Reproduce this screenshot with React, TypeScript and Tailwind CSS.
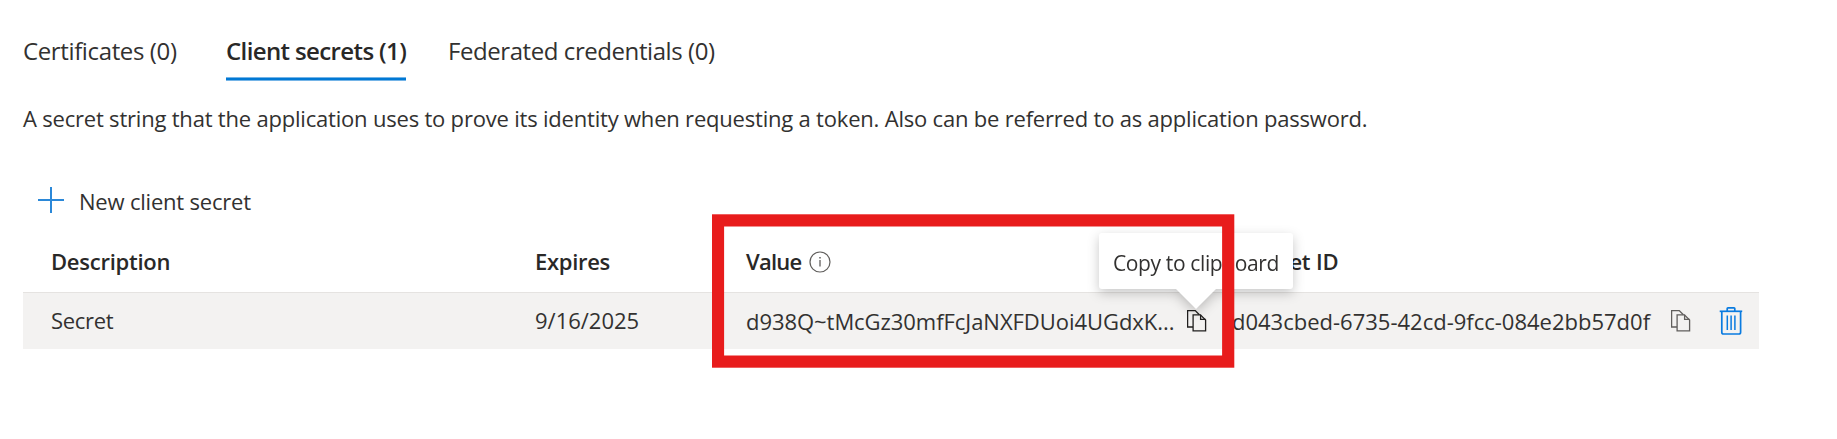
import React from 'react';

const columns = 'grid grid-cols-[484px_211px_486px_1fr] pl-[28px] items-center';

function CopyIcon({ className }: { className: string }) {
  return (
    <svg className={className} width="20" height="22" viewBox="0 0 20 22" fill="none" stroke="currentColor" strokeWidth="1.3">
      <path d="M6 17H.6V.6H8.2L12.4 4.8" />
      <path d="M6.1 4.8H13.4L18.6 10V20.8H6.1Z" />
      <path d="M13.6 4.8V9.4H18.6" />
    </svg>
  );
}

function TrashIcon() {
  return (
    <svg className="text-[#0a7be0]" width="24" height="28" viewBox="0 0 24 28" fill="none" stroke="currentColor" strokeWidth="1.7">
      <path d="M.7 4.3H23.2" />
      <path d="M8.2 4.3V1.6Q8.2.9 9 .9H15Q15.8.9 15.8 1.6V4.3" />
      <path d="M2.8 4.3V25.2Q2.8 27 4.6 27H19.8Q21.6 27 21.6 25.2V4.3" />
      <path d="M8.3 8.5V23M12.1 8.5V23M15.9 8.5V23" strokeWidth="1.5" />
    </svg>
  );
}

export default function App() {
  return (
    <main className="relative h-[439px] w-[1837px] overflow-hidden bg-white pl-[23px] font-['Open_Sans',sans-serif] text-[22px] leading-[30px] whitespace-nowrap text-[#323130]">
      <nav className="flex pt-[35px] text-[24px] leading-8">
        <a className="w-[203px] tracking-[-0.37px]">Certificates (0)</a>
        <a className="flex w-[180px] flex-col font-semibold text-[#292827]">
          <span className="tracking-[-0.62px]">Client secrets (1)</span>
          <span className="mt-[10px] h-1 border-y border-[#74b4e7] bg-[#0078d4]" />
        </a>
        <a className="ml-[42px] tracking-[-0.43px]">Federated credentials (0)</a>
      </nav>

      <p className="mt-[22px] tracking-[-0.2px]">
        A secret string that the application uses to prove its identity when requesting a token. Also can be referred to as application password.
      </p>

      <button className="mt-[52px] flex h-[31px] items-center pl-[15px]">
        <svg className="-mt-px text-[#2b88d8]" width="26" height="26" viewBox="0 0 26 26" stroke="currentColor" strokeWidth="2">
          <path d="M13 0V26M0 13H26" />
        </svg>
        <span className="ml-[15px] tracking-[-0.2px]">New client secret</span>
      </button>

      <section className="w-[1736px] pt-[14px]">
        <div className={`${columns} h-[62px] font-semibold text-[#292827]`}>
          <span className="tracking-[-0.25px]">Description</span>
          <span className="tracking-[-0.3px]">Expires</span>
          <span className="flex items-center gap-[7px]">
            <span className="tracking-[-0.75px]">Value</span>
            <svg className="mt-0.5 text-[#605e5c]" width="22" height="22" viewBox="0 0 22 22" fill="none" stroke="currentColor" strokeWidth="1.2">
              <circle cx="11" cy="11" r="10" />
              <path d="M11 9V15.6" strokeWidth="1.3" />
              <path d="M11 6V7.5" strokeWidth="1.5" />
            </svg>
          </span>
          <span className="pl-[13px] tracking-[-0.2px]">Secret ID</span>
        </div>

        <div className={`${columns} h-[57px] border-t border-[#e5e3e1] bg-[#f3f2f1] pb-[2px]`}>
          <span className="tracking-[-0.3px]">Secret</span>
          <span>9/16/2025</span>
          <span className="flex items-center pt-px">
            <span className="w-[441px] tracking-[-0.05px]">d938Q~tMcGz30mfFcJaNXFDUoi4UGdxK...</span>
            <span className="relative">
              <CopyIcon className="text-[#201f1e]" />
              <span className="absolute bottom-[23px] left-[-88px] flex flex-col drop-shadow-[0_4px_6px_rgba(0,0,0,0.22)]">
                <span className="flex h-14 w-[194px] items-center rounded-[3px] bg-white pt-1 pl-[14px] text-[21px] tracking-[-0.37px]">
                  Copy to clipboard
                </span>
                <svg className="ml-[77px]" width="40" height="20" viewBox="0 0 40 20" fill="white">
                  <path d="M0 0H40L20 20Z" />
                </svg>
              </span>
            </span>
          </span>
          <span className="flex items-center pt-px">
            <span className="w-[439px]">d043cbed-6735-42cd-9fcc-084e2bb57d0f</span>
            <CopyIcon className="text-[#605e5c]" />
            <span className="ml-[28px]">
              <TrashIcon />
            </span>
          </span>
        </div>
      </section>

      <svg className="pointer-events-none absolute top-[214px] left-[712px]" width="523" height="154" viewBox="0 0 523 154" fill="none" stroke="#e81c1c">
        <rect x="6" y="6.4" width="510.2" height="141.2" strokeWidth="12.2" />
      </svg>
    </main>
  );
}
